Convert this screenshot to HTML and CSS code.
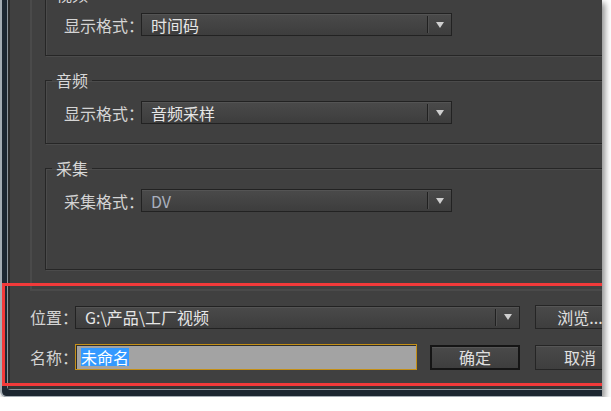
FILE: index.html
```html
<!DOCTYPE html>
<html lang="zh-CN">
<head>
<meta charset="utf-8">
<title>新建项目</title>
<link rel="stylesheet" href="styles.css">
</head>
<body>
<div class="window">
  <div class="frame-inner">
    <div class="client">
      <div class="settings">
        <fieldset class="group first">
          <legend>视频</legend>
          <div class="field">
            <span class="label">显示格式：</span>
            <div class="select"><span class="value">时间码</span><span class="arrow"></span></div>
          </div>
        </fieldset>
        <fieldset class="group">
          <legend>音频</legend>
          <div class="field">
            <span class="label">显示格式：</span>
            <div class="select"><span class="value">音频采样</span><span class="arrow"></span></div>
          </div>
        </fieldset>
        <fieldset class="group tall">
          <legend>采集</legend>
          <div class="field">
            <span class="label">采集格式：</span>
            <div class="select"><span class="value dim">DV</span><span class="arrow"></span></div>
          </div>
        </fieldset>
      </div>

      <div class="footer">
        <div class="row">
          <span class="label short">位置：</span>
          <div class="select path"><span class="value">G:\产品\工厂视频</span><span class="arrow"></span></div>
          <button class="btn browse">浏览...</button>
        </div>
        <div class="row second">
          <span class="label short">名称：</span>
          <div class="name-field"><span class="sel">未命名</span></div>
          <button class="btn default">确定</button>
          <button class="btn cancel">取消</button>
        </div>
      </div>
    </div>
  </div>
  <div class="callout"></div>
</div>
</body>
</html>
```
FILE: styles.css
```css
html, body {
  margin: 0;
  padding: 0;
  background: #ffffff;
}

body {
  font-family: "Noto Sans CJK SC", "Noto Sans", sans-serif;
  font-size: 16px;
  line-height: 18px;
  color: #d6d6d6;
}

/* dialog frame: light outer rim, navy band, thin inner rim */
.window {
  position: relative;
  width: 602px;
  height: 397px;
  box-sizing: border-box;
  background: #1d2731;
  border-left: 2px solid #a4acb3;
  border-bottom: 1px solid #a4acb3;
  border-bottom-left-radius: 6px;
  padding: 0 0 6px 5px;
  box-shadow: 3px 3px 6px rgba(0, 0, 0, 0.45);
  overflow: hidden;
}

.frame-inner {
  height: 100%;
  box-sizing: border-box;
  border-left: 1px solid #8e969d;
  border-bottom: 1px solid #8e969d;
  border-bottom-left-radius: 4px;
}

.client {
  height: 100%;
  box-sizing: border-box;
  background: #404040;
  border-left: 2px solid #2b2b2b;
  border-bottom: 3px solid #363636;
  overflow: hidden;
}

/* panel holding the three group boxes */
.settings {
  margin: -28px 0 0 20px;
  width: 720px;
  padding: 13px 0 19px 13px;
  border-left: 2px solid #4a4a4a;
  border-bottom: 2px solid #4a4a4a;
}

.group {
  margin: 15px 0 0 0;
  padding: 12px 0 19px 0;
  width: 620px;
  border: 1px solid #262626;
  box-shadow: 1px 1px 0 #4b4b4b, inset 1px 1px 0 #4b4b4b;
  min-inline-size: 0;
}

.group.first {
  margin-top: 0;
  padding-top: 10px;
}

.group.tall {
  padding-bottom: 57px;
}

.group legend {
  margin-left: 6px;
  padding: 0 4px;
  line-height: 18px;
  color: #d8d8d8;
}

.field {
  display: flex;
  align-items: center;
  padding-left: 18px;
}

.label {
  flex: 0 0 77px;
  width: 77px;
  min-width: 0;
  overflow: visible;
  white-space: nowrap;
  color: #d4d4d4;
}

.label.short {
  flex-basis: 45px;
  width: 45px;
}

/* drop-down list */
.select {
  display: flex;
  flex: 0 0 auto;
  align-items: center;
  width: 311px;
  height: 23px;
  box-sizing: border-box;
  border: 1px solid #222222;
  background: linear-gradient(#4a4a4a, #3d3d3d);
  box-shadow: inset 0 1px 0 #545454;
  color: #e6e6e6;
}

.select .value {
  flex: 1;
  padding-left: 9px;
  white-space: nowrap;
}

.select .value.dim {
  color: #a9b0bd;
}

.select .arrow {
  flex: 0 0 23px;
  height: 17px;
  display: flex;
  align-items: center;
  justify-content: center;
  border-left: 1px solid #202020;
  box-shadow: inset 1px 0 0 #505050;
}

.select .arrow::after {
  content: "";
  border-left: 4px solid transparent;
  border-right: 4px solid transparent;
  border-top: 6px solid #cfcfcf;
}

/* location / name rows */
.footer {
  padding: 14px 0 0 20px;
}

.row {
  display: flex;
  align-items: center;
  white-space: nowrap;
}

.row.second {
  margin-top: 15px;
}

.select.path {
  width: 445px;
}

.btn {
  flex: 0 0 90px;
  height: 25px;
  box-sizing: border-box;
  padding: 0;
  font: inherit;
  line-height: 18px;
  color: #e0e0e0;
  border: 1px solid #252525;
  background: linear-gradient(#4a4a4a, #3e3e3e);
  box-shadow: inset 0 1px 0 #565656;
}

.btn.browse {
  margin-left: 15px;
  height: 24px;
}

.btn.default {
  margin-left: 13px;
  border: 2px solid #151515;
}

.btn.cancel {
  margin-left: 15px;
}

.name-field {
  display: flex;
  flex: 0 0 auto;
  align-items: center;
  width: 342px;
  height: 26px;
  box-sizing: border-box;
  padding-left: 5px;
  border: 1px solid #c48f16;
  background: #a3a3a3;
  box-shadow: inset 1px 1px 0 #2e2e2e;
}

.name-field .sel {
  background: #3399ff;
  color: #ffffff;
}

/* red annotation frame drawn over the lower part of the dialog */
.callout {
  position: absolute;
  left: 0;
  top: 283px;
  width: 620px;
  height: 103px;
  box-sizing: border-box;
  border: 3px solid #f23a3a;
}
```
